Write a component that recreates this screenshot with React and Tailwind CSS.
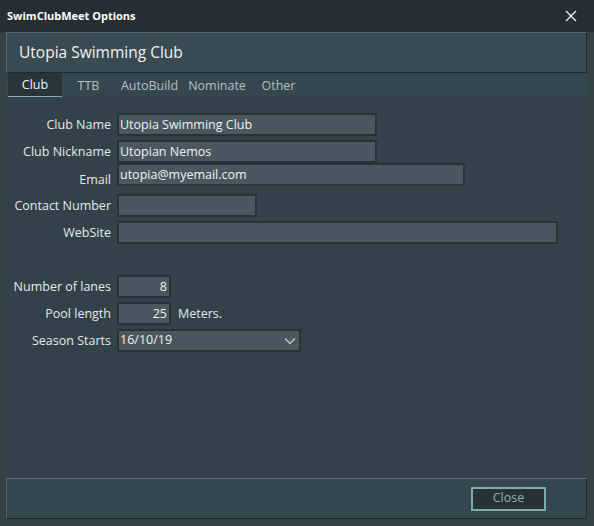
const font = { fontFamily: '"Open Sans", "Noto Sans", sans-serif' };

function Field({ label, width, value = "", right = false, labelClass = "", className = "" }) {
    return (
        <div className={`flex items-center ${className}`}>
            <div className={`w-[105px] shrink-0 text-right text-[12.5px] leading-[17px] text-[#e3e9eb] ${labelClass}`}>{label}</div>
            <div
                className={`ml-[6px] h-[23px] border-2 border-[#263339] bg-[#4a5760] px-[1px] text-[12.5px] leading-[19px] text-[#eef2f3] ${right ? "text-right pr-[2px]" : ""} ${width}`}
            >
                {value}
            </div>
        </div>
    );
}

export default function App() {
    const tabs = [
        { name: "Club", w: "w-[54px]", active: true },
        { name: "TTB", w: "w-[53px]" },
        { name: "AutoBuild", w: "w-[69px]" },
        { name: "Nominate", w: "w-[66px]" },
        { name: "Other", w: "w-[57px]" },
    ];

    return (
        <div style={font} className="flex h-[526px] w-[594px] flex-col bg-[#36454d] select-none">
            {/* title bar */}
            <div className="flex h-[32px] shrink-0 items-center justify-between bg-[#252e35] pl-[7px] pr-[17px]">
                <span className="text-[11px] font-bold text-white">SwimClubMeet Options</span>
                <svg width="12" height="12" viewBox="0 0 12 12">
                    <path d="M1 1 L11 11 M11 1 L1 11" stroke="#f2f4f5" strokeWidth="1.3" fill="none" />
                </svg>
            </div>

            <div className="flex flex-1 flex-col bg-[#334249] pl-[6px] pr-[7px] pb-[7px]">
                {/* header */}
                <div className="flex h-[41px] shrink-0 items-center border border-t-[#5b6b73] border-l-[#55656d] border-b-[#1f292e] border-r-[#1f292e] bg-[#394a52] pl-[12px]">
                    <span className="text-[15.5px] text-[#eef2f3]">Utopia Swimming Club</span>
                </div>

                {/* tabs */}
                <div className="flex h-[24px] shrink-0 bg-[#36464e] pl-[2px]">
                    {tabs.map((t) => (
                        <div
                            key={t.name}
                            className={`${t.w} flex items-center justify-center pt-[2px] text-[12.5px] ${
                                t.active
                                    ? "border-b border-[#8aa9ad] bg-[#28343b] text-[#eef2f3]"
                                    : "text-[#b3c0c6]"
                            }`}
                        >
                            {t.name}
                        </div>
                    ))}
                </div>

                {/* content */}
                <div className="flex flex-1 flex-col bg-[#32414a] pt-[16px]">
                    <Field label="Club Name" width="w-[260px]" value="Utopia Swimming Club" />
                    <Field label="Club Nickname" width="w-[260px]" value="Utopian Nemos" className="mt-[4px]" />
                    <Field label="Email" width="w-[348px]" value="utopia@myemail.com" labelClass="translate-y-[5px]" />
                    <Field label="Contact Number" width="w-[140px]" className="mt-[8px]" />
                    <Field label="WebSite" width="w-[441px]" className="mt-[4px]" />

                    <Field label="Number of lanes" width="w-[54px]" value="8" right className="mt-[31px]" />
                    <div className="mt-[4px] flex items-center">
                        <Field label="Pool length" width="w-[54px]" value="25" right />
                        <span className="ml-[7px] mt-[2px] text-[12.5px] text-[#e3e9eb]">Meters.</span>
                    </div>
                    <div className="mt-[4px] flex items-center">
                        <div className="w-[105px] shrink-0 text-right text-[12.5px] leading-[17px] text-[#e3e9eb]">Season Starts</div>
                        <div className="ml-[6px] flex h-[23px] w-[184px] items-center justify-between border-2 border-[#263339] bg-[#4a5760] pl-[1px] pr-[3px] text-[12.5px] text-[#eef2f3]">
                            <span>16/10/19</span>
                            <svg width="12" height="8" viewBox="0 0 12 8">
                                <path d="M1 1.5 L6 6.5 L11 1.5" stroke="#c9d3d7" strokeWidth="1.2" fill="none" />
                            </svg>
                        </div>
                    </div>
                </div>

                {/* footer */}
                <div className="mt-[2px] flex h-[41px] shrink-0 items-center justify-end border border-t-[#5f7078] border-l-[#55656d] border-b-[#1f292e] border-r-[#1f292e] bg-[#36464e] pr-[40px]">
                    <button className="flex h-[24px] w-[75px] items-center justify-center border-2 border-[#7eaaa9] bg-[#263238] text-[12.5px] text-[#8cb1b1]">
                        Close
                    </button>
                </div>
            </div>
        </div>
    );
}
